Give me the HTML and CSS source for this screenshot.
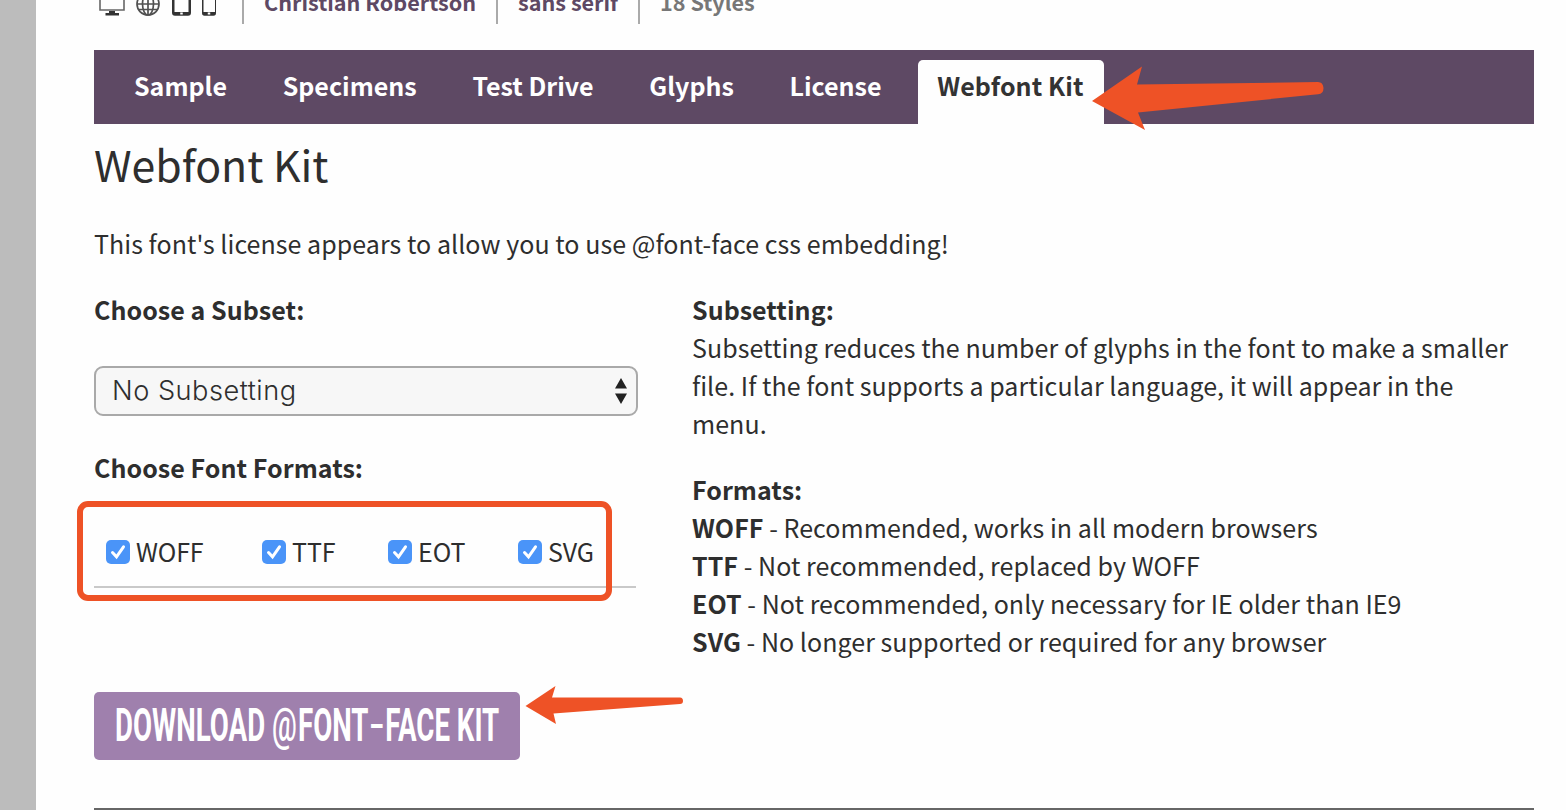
FILE: index.html
```html
<!DOCTYPE html>
<html lang="en">
<head>
<meta charset="utf-8">
<title>Webfont Kit</title>
<link rel="stylesheet" href="styles.css">
</head>
<body>
<div class="page">
  <header class="meta">
    <svg class="devices" width="130" height="24" viewBox="0 0 130 24" fill="none">
      <path d="M6 0V18H30V0" stroke="#666" stroke-width="1.600"/>
      <path d="M15 19H21V21H25V23.500H11.500V21H15Z" fill="#333"/>
      <g stroke="#505050" stroke-width="1.700"><circle cx="54" cy="12" r="11"/><ellipse cx="54" cy="12" rx="5.500" ry="11"/><path d="M54 1V23M43 12H65M45 17.500H63"/></g>
      <path d="M78 0V20.500Q78 23.800 81 23.800H94Q97 23.800 97 20.500V0H94.500V20H80.500V0Z" fill="#333"/>
      <path d="M108 0V21Q108 23.800 110.500 23.800H119.500Q122 23.800 122 21V0H121V20H109.500V0Z" fill="#333"/>
      <path d="M87.500 20.500V22.500M115 20.500V22.500" stroke="#fff" stroke-width="2.500"/>
    </svg>
    <div class="meta-item author">Christian Robertson</div>
    <div class="meta-item kind">sans serif</div>
    <div class="meta-item styles">18 Styles</div>
  </header>
  <nav class="tabs">
    <a class="tab">Sample</a><a class="tab">Specimens</a><a class="tab">Test Drive</a><a class="tab">Glyphs</a><a class="tab">License</a><a class="tab active">Webfont Kit</a>
  </nav>
  <h1 class="title">Webfont Kit</h1>
  <p class="intro">This font's license appears to allow you to use @font-face css embedding!</p>
  <div class="columns">
    <section class="form">
      <h2 class="label">Choose a Subset:</h2>
      <div class="select"><span>No Subsetting</span>
        <svg width="14" height="26" viewBox="0 0 14 26"><path d="M7 0L13 10.500H1ZM7 26L13 15.500H1Z" fill="#222"/></svg>
      </div>
      <h2 class="label formats-label">Choose Font Formats:</h2>
      <div class="formats">
        <label class="format woff"><svg class="check" viewBox="0 0 24 24"><path d="M6.500 12.500L10.500 16.800L17.500 6.800"/></svg><span>WOFF</span></label>
        <label class="format ttf"><svg class="check" viewBox="0 0 24 24"><path d="M6.500 12.500L10.500 16.800L17.500 6.800"/></svg><span>TTF</span></label>
        <label class="format eot"><svg class="check" viewBox="0 0 24 24"><path d="M6.500 12.500L10.500 16.800L17.500 6.800"/></svg><span>EOT</span></label>
        <label class="format svg"><svg class="check" viewBox="0 0 24 24"><path d="M6.500 12.500L10.500 16.800L17.500 6.800"/></svg><span>SVG</span></label>
      </div>
      <button class="download"><span class="download-text">DOWNLOAD <span class="at">@</span>FONT<span class="dash">-</span>FACE KIT</span></button>
    </section>
    <section class="help">
      <p><b>Subsetting:</b><br>Subsetting reduces the number of glyphs in the font to make a smaller<br>file. If the font supports a particular language, it will appear in the<br>menu.</p>
      <p><b>Formats:</b><br><b>WOFF</b> - Recommended, works in all modern browsers<br><b>TTF</b> - Not recommended, replaced by WOFF<br><b>EOT</b> - Not recommended, only necessary for IE older than IE9<br><b>SVG</b> - No longer supported or required for any browser</p>
    </section>
  </div>
  <div class="rule"></div>
</div>
<div class="highlight"></div>
<svg class="arrows" width="1566" height="810" viewBox="0 0 1566 810" fill="#ee5226">
  <path d="M1092 101L1142 66.500L1137 84.500L1318 82Q1323 82 1323.500 88Q1323.500 94 1318 94.200L1138 112.500L1145 130Z"/>
  <path d="M525.500 706L555.500 686L552 697.500L680 697.500Q683 697.500 683 701Q683 704 680 704L553.500 713.500L556 724Z"/>
</svg>
</body>
</html>
```

FILE: styles.css
```css
* { box-sizing: border-box; }
body {
  margin: 0;
  height: 810px;
  overflow: hidden;
  position: relative;
  background: #fefefe;
  color: #2e2e2e;
  font: 25px/38px "Noto Sans CJK SC", "Open Sans", sans-serif;
  letter-spacing: .05px;
}
.page {
  height: 810px;
  border-left: 36px solid #bcbcbc;
  padding: 0 32px 0 58px;
  display: flex;
  flex-direction: column;
}
h1, h2, p { margin: 0; }
.meta { height: 50px; flex: none; display: flex; align-items: flex-start; white-space: nowrap; letter-spacing: 0; }
.devices { margin-top: -8px; width: 130px; flex: none; }
.meta-item { height: 24px; padding-left: 20px; border-left: 2px solid #aaa; font-size: 21.6px; line-height: 4px; font-weight: 700; color: #5e4964; }
.author { margin-left: 18px; width: 254px; }
.kind { width: 142px; }
.styles { color: #777; }
.tabs { height: 74px; flex: none; background: #5e4964; padding: 10px 0 0 21px; display: flex; gap: 17.7px; letter-spacing: 0; }
.tab { padding: 0 19px; height: 64px; line-height: 51px; font-weight: 700; color: #fff; white-space: nowrap; }
.tab.active { width: 186px; background: #fefefe; color: #333; border-radius: 5px 5px 0 0; letter-spacing: .08px; }
.title { margin-top: 9px; font-size: 42.8px; line-height: 60px; font-weight: 400; letter-spacing: 0; }
.intro { margin-top: 31px; white-space: nowrap; }
.columns { display: flex; margin-top: 28px; height: 518px; flex: none; white-space: nowrap; }
.form { width: 598px; flex: none; }
.label { font-size: inherit; font-weight: 700; }
.select {
  margin-top: 38px; width: 544px; height: 50px; padding: 0 8px 0 16px;
  display: flex; align-items: center; justify-content: space-between;
  background: #f7f7f7; border: 2px solid #a9a9a9; border-radius: 9px;
  font: 300 27.2px/46px Inter, "Liberation Sans", sans-serif;
  letter-spacing: .5px;
}
.formats-label { margin-top: 32px; }
.formats { display: flex; width: 542px; height: 102px; padding: 47px 0 0 12px; border-bottom: 2px solid #c9c9c9; }
.format { display: flex; align-items: center; height: 38px; gap: 6px; letter-spacing: -.1px; }
.format span { margin-top: -2px; }
.woff { width: 156px; }
.ttf { width: 126px; }
.eot { width: 130px; }
.check { width: 24px; height: 24px; border-radius: 5px; background: #4a94f8; fill: none; stroke: #fff; stroke-width: 3; stroke-linecap: round; }
.download {
  display: flex; align-items: center; margin: 104px 0 0; width: 426px; height: 68px; padding: 0 0 3px 21px;
  border: 0; border-radius: 5px; background: #9f80ad; color: #fff;
}
.download-text { font: 700 46px/68px Roboto, sans-serif; transform: scaleX(.601); transform-origin: left center; white-space: nowrap; }
.at { font-weight: 500; letter-spacing: 2px; }
.dash { display: inline-block; width: 28px; text-align: center; transform: translateY(-1px) scale(1.5, .8); }
.help { display: flex; flex-direction: column; gap: 28px; }
.rule { height: 2px; background: #666; flex: none; }
.highlight { position: absolute; left: 77px; top: 501px; width: 535px; height: 100px; border: 6px solid #ee5226; border-radius: 11px; }
.arrows { position: absolute; left: 0; top: 0; pointer-events: none; }
```
